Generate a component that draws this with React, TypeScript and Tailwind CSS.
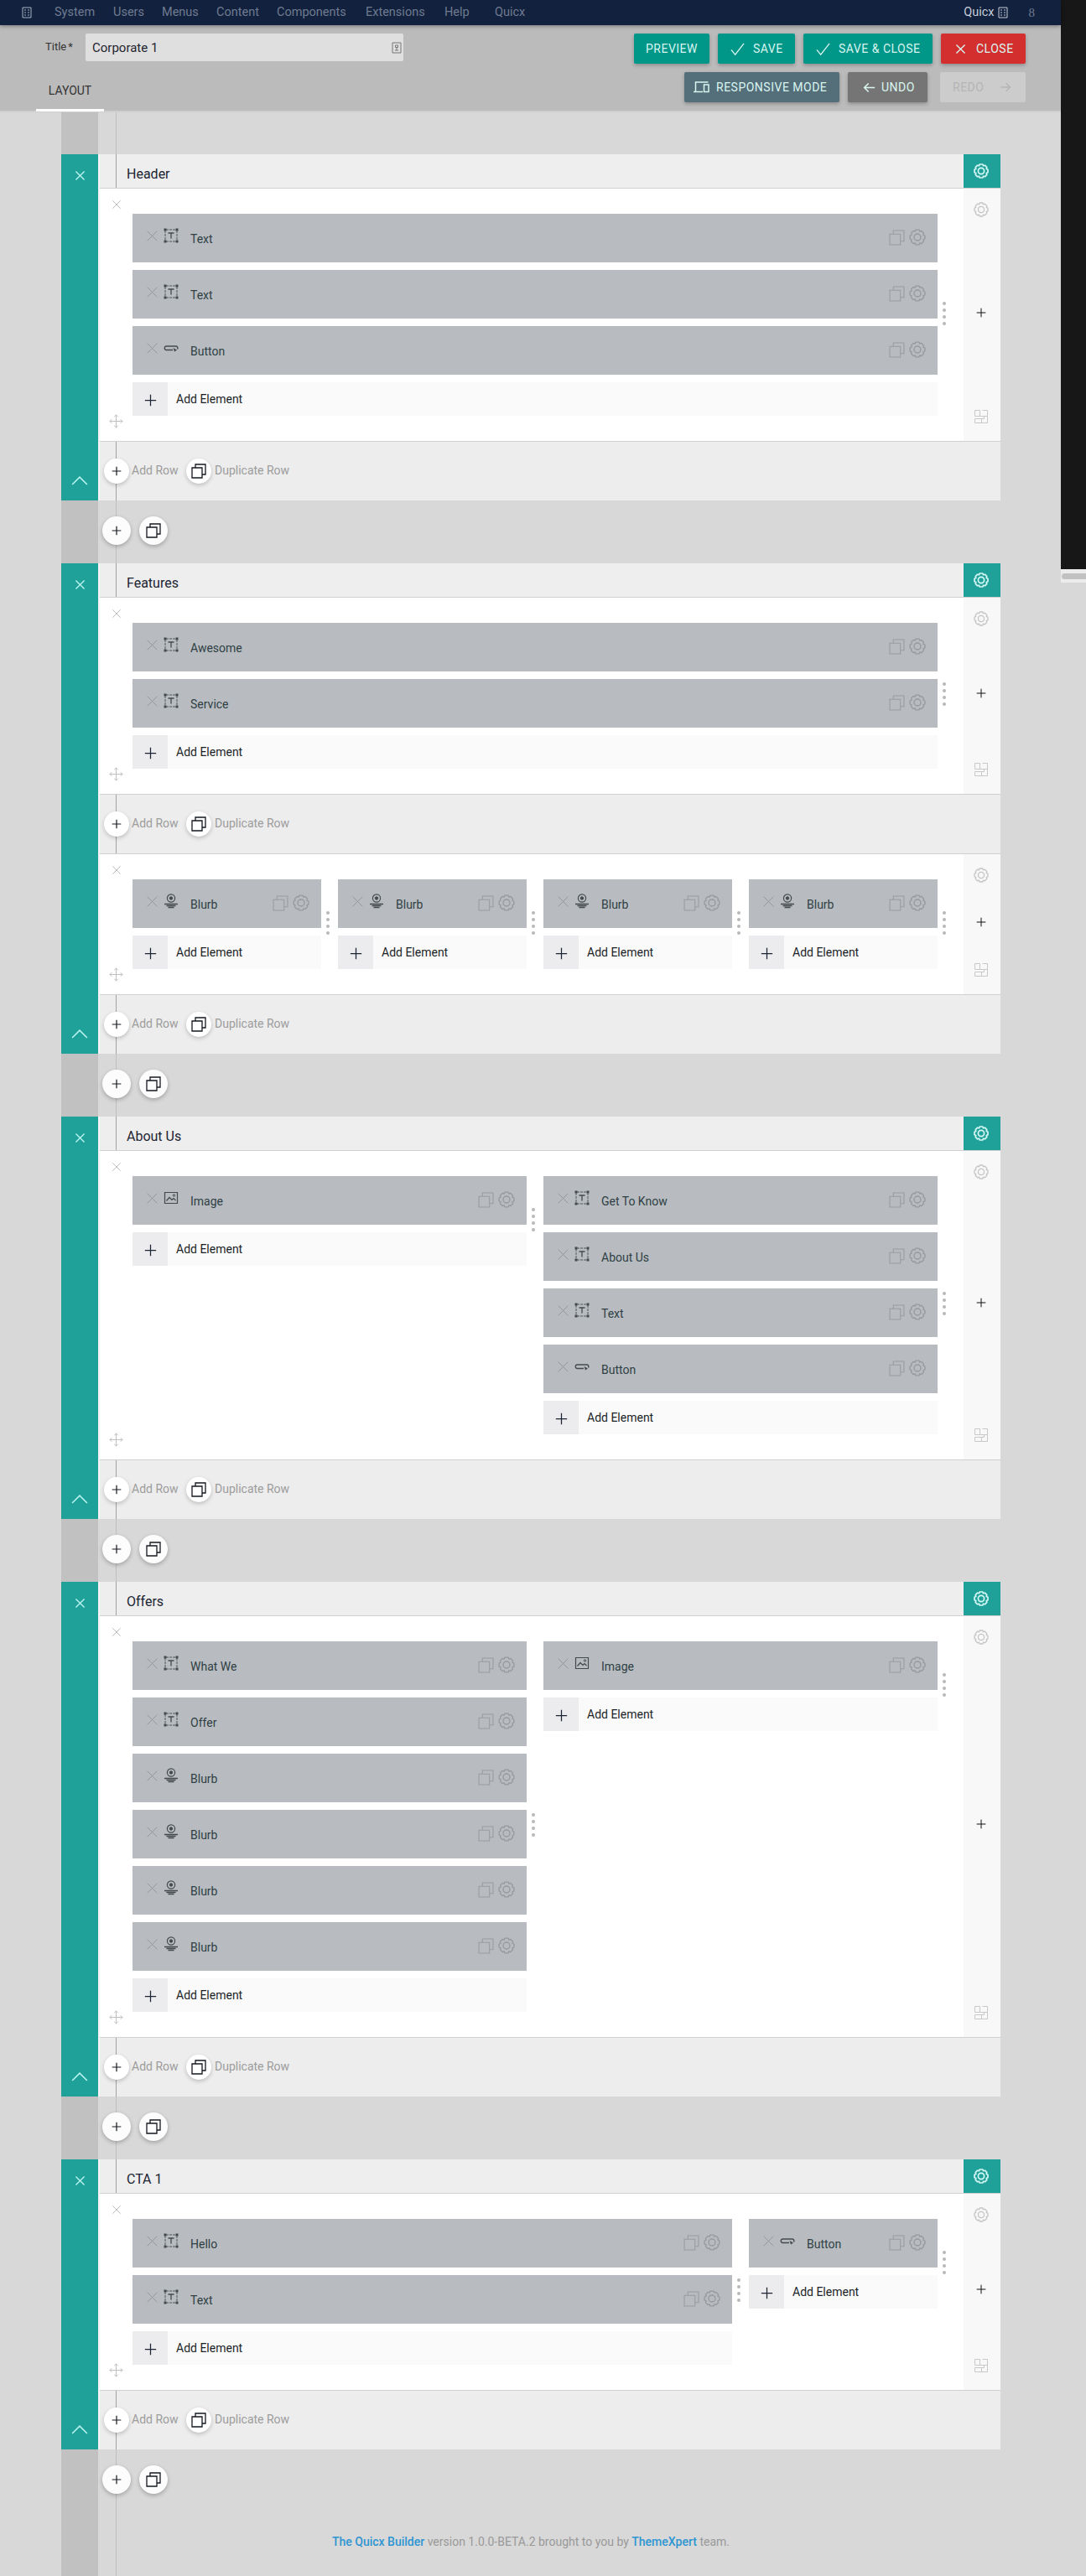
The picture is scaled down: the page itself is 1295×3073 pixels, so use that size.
import React from "react";

type Kind = "text" | "button" | "blurb" | "image";
type Item = [Kind, string];
type Col = { span: 1 | 2 | 3 | 4; items: Item[] };
type Section = { title: string; rows: Col[][] };

const blurb: Item = ["blurb", "Blurb"];
const sections: Section[] = [
  { title: "Header", rows: [[{ span: 4, items: [["text", "Text"], ["text", "Text"], ["button", "Button"]] }]] },
  {
    title: "Features",
    rows: [
      [{ span: 4, items: [["text", "Awesome"], ["text", "Service"]] }],
      [{ span: 1, items: [blurb] }, { span: 1, items: [blurb] }, { span: 1, items: [blurb] }, { span: 1, items: [blurb] }],
    ],
  },
  {
    title: "About Us",
    rows: [[
      { span: 2, items: [["image", "Image"]] },
      { span: 2, items: [["text", "Get To Know"], ["text", "About Us"], ["text", "Text"], ["button", "Button"]] },
    ]],
  },
  {
    title: "Offers",
    rows: [[
      { span: 2, items: [["text", "What We"], ["text", "Offer"], blurb, blurb, blurb, blurb] },
      { span: 2, items: [["image", "Image"]] },
    ]],
  },
  {
    title: "CTA 1",
    rows: [[
      { span: 3, items: [["text", "Hello"], ["text", "Text"]] },
      { span: 1, items: [["button", "Button"]] },
    ]],
  },
];

const spans = { 1: "col-span-1", 2: "col-span-2", 3: "col-span-3", 4: "col-span-4" };

function Svg({ size, sw = 1, className = "", children }: { size: number; sw?: number; className?: string; children: React.ReactNode }) {
  return (
    <svg width={size} height={size} viewBox="0 0 18 18" fill="none" stroke="currentColor" strokeWidth={sw} className={"shrink-0 " + className}>
      {children}
    </svg>
  );
}

const Cross = ({ size, sw, className }: { size: number; sw?: number; className?: string }) => (
  <Svg size={size} sw={sw} className={className}><path d="M2 2L16 16M16 2L2 16" /></Svg>
);
const Plus = ({ size, sw, className }: { size: number; sw?: number; className?: string }) => (
  <Svg size={size} sw={sw} className={className}><path d="M9 1V17M1 9H17" /></Svg>
);
const Copy = ({ size, sw, className }: { size: number; sw?: number; className?: string }) => (
  <Svg size={size} sw={sw} className={className}><path d="M1 5H13V17H1ZM5 5V1H17V13H13" /></Svg>
);

const gearPath = "M7.2 1H10.8L11.5 2.8L13.4 2.2L15.8 4.6L15.2 6.5L17 7.2V10.8L15.2 11.5L15.8 13.4L13.4 15.8L11.5 15.2L10.8 17H7.2L6.5 15.2L4.6 15.8L2.2 13.4L2.8 11.5L1 10.8V7.2L2.8 6.5L2.2 4.6L4.6 2.2L6.5 2.8Z";
const Gear = ({ size, sw, className }: { size: number; sw?: number; className?: string }) => (
  <Svg size={size} sw={sw} className={className}>
    <path d={gearPath} strokeLinejoin="round" />
    <circle cx="9" cy="9" r="3.6" />
  </Svg>
);
const Move = () => (
  <Svg size={17} className="text-[#bcbcbc]">
    <path d="M9 1V17M1 9H17M6.500 3.500L9 1L11.500 3.500M6.500 14.500L9 17L11.500 14.500M3.500 6.500L1 9L3.500 11.500M14.500 6.500L17 9L14.500 11.500" />
  </Svg>
);
const GridIcon = () => (
  <Svg size={18} className="text-[#c8c8c8]">
    <path d="M1.500 1.500H7.500V8.500H1.500ZM10.500 1.500H16.500V8.500H7.500M1.500 11.500H9.500V16.500H1.500ZM12.500 8.500H16.500V16.500H9.500V11.500H12.500Z" />
  </Svg>
);

function KindIcon({ kind }: { kind: Kind }) {
  return (
    <Svg size={18} className="text-[#43494d]">
      {kind === "text" && (
        <>
          <path d="M3 2H15M3 16H15M2 3V15M16 3V15" strokeDasharray="3 1" strokeWidth="0.9" />
          <g fill="currentColor" stroke="none">
            <rect x="0.500" y="0.500" width="3" height="3" /><rect x="14.500" y="0.500" width="3" height="3" />
            <rect x="0.500" y="14.500" width="3" height="3" /><rect x="14.500" y="14.500" width="3" height="3" />
          </g>
          <path d="M5.500 6H12.500M9 6V12.500" strokeWidth="1.300" />
        </>
      )}
      {kind === "button" && (
        <>
          <path d="M11 11.500H3A2.300 2.300 0 0 1 3 7H15A2.300 2.300 0 0 1 16.500 10.500" strokeWidth="1.400" />
          <path d="M11.500 9L16 11.500L13 13.500Z" fill="currentColor" stroke="none" />
        </>
      )}
      {kind === "blurb" && (
        <>
          <circle cx="9" cy="5.500" r="4.600" strokeWidth="1.200" />
          <circle cx="9" cy="5.500" r="1.700" fill="currentColor" />
          <path d="M1 12.500H17M3.500 14.500H14.500M5.500 16.500H12.500" strokeWidth="1.300" />
        </>
      )}
      {kind === "image" && (
        <>
          <path d="M1.500 2.500H16.500V15.500H1.500Z" strokeWidth="1.200" />
          <path d="M3.500 12.500L7 8.500L10 11.500L12 9.500L14.500 12" strokeWidth="1.200" />
          <circle cx="12.500" cy="6" r="1.200" />
        </>
      )}
    </Svg>
  );
}

function Element({ item }: { item: Item }) {
  return (
    <div className="flex h-[58px] items-center bg-[#b8bcc0] pl-4 pr-[14px]">
      <Cross size={15} sw={1.2} className="mb-1.5 text-[#94989c]" />
      <div className="mb-1.5 ml-[6px] flex"><KindIcon kind={item[0]} /></div>
      <span className="ml-[14px] mt-0.5 flex-1 whitespace-nowrap text-[14px] text-[#2f3f44]">{item[1]}</span>
      <Copy size={19} className="mb-0.5 text-[#989ca0]" />
      <Gear size={20} sw={1.2} className="mb-0.5 ml-[5px] text-[#96999d]" />
    </div>
  );
}

function Column({ col }: { col: Col }) {
  return (
    <div className={"relative flex flex-col gap-[9px] " + spans[col.span]}>
      {col.items.map((it, i) => <Element key={i} item={it} />)}
      <div className="flex h-10 items-center bg-[#fafafa]">
        <div className="flex h-10 w-[42px] items-center justify-center bg-[#ececee] text-[#1d2433]">
          <Plus size={15} sw={1.5} className="mt-0.5" />
        </div>
        <span className="ml-[10px] whitespace-nowrap text-[14px] text-[#1b1f26]">Add Element</span>
      </div>
      <div className="absolute -right-[10px] top-1/2 -mt-4 flex flex-col gap-1">
        {[0, 1, 2, 3].map((d) => <i key={d} className="size-1 rounded-full bg-[#b8b8b8]" />)}
      </div>
    </div>
  );
}

function Row({ cols }: { cols: Col[] }) {
  return (
    <>
      <div className="flex border-y border-[#d0d0d0] bg-white">
        <div className="flex w-[39px] flex-col items-center justify-between pb-[15px] pt-[13px]">
          <Cross size={12} sw={1.5} className="text-[#bcbcbc]" />
          <Move />
        </div>
        <div className="grid w-[960px] grid-cols-4 items-start gap-5 py-[30px]">
          {cols.map((c, i) => <Column key={i} col={c} />)}
        </div>
        <div className="ml-auto flex w-11 flex-col items-center justify-between bg-[#f8f8f8] pb-5 pr-0.5 pt-4">
          <Gear size={18} sw={1.3} className="text-[#c4c4c4]" />
          <Plus size={12} sw={1.5} className="mb-0.5 text-[#111]" />
          <GridIcon />
        </div>
      </div>
      <div className="relative flex h-[70px] items-center bg-[#ededed] pl-[5px] text-[14px] text-[#9c9c9c]">
        <i className="absolute left-[19px] top-0 h-full w-px bg-[#a2a2a2]" />
        <div className="relative z-10 flex size-[30px] items-center justify-center rounded-full bg-white text-[#14181f] shadow-[0_2px_5px_rgba(0,0,0,0.2)]">
          <Plus size={12} sw={1.8} />
        </div>
        <span className="mb-0.5 ml-[3px] w-[65px] whitespace-nowrap">Add Row</span>
        <div className="flex size-[30px] items-center justify-center rounded-full bg-white pr-px text-[#14181f] shadow-[0_2px_5px_rgba(0,0,0,0.2)]">
          <Copy size={18} sw={1.3} />
        </div>
        <span className="mb-0.5 ml-1 whitespace-nowrap">Duplicate Row</span>
      </div>
    </>
  );
}

function SectionBlock({ s }: { s: Section }) {
  return (
    <>
      <div className="flex w-[1120px]">
        <div className="flex w-11 flex-col items-center justify-between bg-[#1fa19a] pb-[14px] pt-[19px] text-[#b9f3ee]">
          <Cross size={13} sw={1.9} />
          <Svg size={20} sw={1.4}><path d="M1 13.500L9 5.500L17 13.500" /></Svg>
        </div>
        <div className="w-0.5 bg-[#f4f4f4]" />
        <div className="flex flex-1 flex-col">
          <div className="relative flex h-10 items-center bg-[#eeeeee]">
            <i className="absolute left-[19px] top-0 h-full w-px bg-[#a2a2a2]" />
            <span className="ml-8 mt-2 flex-1 text-[16px] text-[#1c2433]">{s.title}</span>
            <div className="flex h-10 w-11 items-center justify-center bg-[#1fa19a] pr-0.5 text-[#d5f8f5]">
              <Gear size={18} sw={1.7} />
            </div>
          </div>
          {s.rows.map((r, i) => <Row key={i} cols={r} />)}
        </div>
      </div>
      <div className="flex h-[75px] items-center gap-[10px] pb-[3px] pl-[49px]">
        <div className="z-10 flex size-[34px] items-center justify-center rounded-full bg-[#fcfcfc] text-[#14181f] shadow-[0_2px_5px_rgba(0,0,0,0.25)]">
          <Plus size={12} sw={1.8} />
        </div>
        <div className="flex size-[34px] items-center justify-center rounded-full bg-[#fcfcfc] pr-px text-[#14181f] shadow-[0_2px_5px_rgba(0,0,0,0.25)]">
          <Copy size={18} sw={1.3} />
        </div>
      </div>
    </>
  );
}

const menu: [string, string][] = [
  ["System", "w-[70px]"], ["Users", "w-[58px]"], ["Menus", "w-[65px]"], ["Content", "w-[72px]"],
  ["Components", "w-[106px]"], ["Extensions", "w-[94px]"], ["Help", "w-[60px]"], ["Quicx", "w-[60px]"],
];

const Missing = ({ className }: { className: string }) => (
  <svg width="12" height="14" viewBox="0 0 12 14" fill="none" stroke="currentColor" className={className}>
    <path d="M1 1H11V13H1ZM3 4H5M7 4H9M3 7H5M7 7H9M3 10H5M7 10H9" />
  </svg>
);

const btn = "flex h-9 items-center whitespace-nowrap rounded-[2px] text-[14px] tracking-[0.5px] text-[#d9f5f0] shadow-[0_2px_4px_rgba(0,0,0,0.25)] ";
const Check = () => <Svg size={17} sw={1.4} className="ml-[15px] mr-[10px]"><path d="M1 10L6 16L17 2" /></Svg>;

export default function App() {
  return (
    <div className="flex h-[3073px] w-[1295px] overflow-hidden bg-[#d8d8d8] font-['Roboto',sans-serif] leading-5">
      <div className="flex w-[1265px] flex-col">
        <nav className="relative z-20 flex h-[30px] shrink-0 items-center bg-[#12213d] pl-[26px] text-[14.5px] text-[#6f7b91] shadow-[0_1px_5px_rgba(0,0,0,0.4)]">
          <Missing className="mr-[27px] text-[#a9b3c4]" />
          {menu.map(([m, w]) => <span key={m} className={w}>{m}</span>)}
          <span className="ml-auto text-[#c6cedb]">Quicx</span>
          <Missing className="ml-1 mr-[25px] text-[#c6cedb]" />
          <span className="mr-[31px] font-['Liberation_Serif',serif] text-[15px]">8</span>
        </nav>
        <header className="flex h-[104px] shrink-0 border-b-2 border-[#cfcfcf] bg-[#bbbbbb]">
          <div className="flex flex-1 flex-col justify-between pt-[10px]">
            <div className="flex items-center pl-[54px]">
              <span className="mb-0.5 w-12 whitespace-nowrap text-[13px] text-[#333]">Title<span className="ml-0.5">*</span></span>
              <div className="flex h-[33px] w-[379px] items-center justify-between rounded-[2px] bg-[#dfdfdf] pl-2 pr-[2px] text-[15px] text-[#1f2630]">
                Corporate 1
                <svg width="12" height="14" viewBox="0 0 12 14" fill="none" stroke="#777" className="shrink-0">
                  <path d="M1 1H11V13H1ZM4.500 4H7.500V6.500H4.500ZM4 10H8M6 6.500V10" />
                </svg>
              </div>
            </div>
            <div className="-mb-px ml-[43px] flex h-[43px] w-[81px] justify-center border-b-[3px] border-white pt-[8px] text-[14px] text-[#333]">LAYOUT</div>
          </div>
          <div className="flex flex-col items-end gap-[10px] pr-[42px] pt-[10px]">
            <div className="flex gap-[10px]">
              <div className={btn + "w-[90px] justify-center bg-[#009688]"}>PREVIEW</div>
              <div className={btn + "w-[92px] bg-[#009688]"}><Check />SAVE</div>
              <div className={btn + "w-[154px] bg-[#009688]"}><Check />SAVE &amp; CLOSE</div>
              <div className={btn + "w-[101px] bg-[#d32f2f]"}><Cross size={13} sw={1.9} className="ml-[17px] mr-[12px]" />CLOSE</div>
            </div>
            <div className="flex">
              <div className={btn + "mr-[10px] w-[185px] bg-[#546e7a]"}>
                <svg width="19" height="14" viewBox="0 0 19 14" fill="none" stroke="currentColor" strokeWidth="1.500" className="ml-[11px] mr-2">
                  <path d="M0 12.500H11M2.500 12V1H17.500M12.500 4H18V12.500H12.500Z" />
                </svg>
                RESPONSIVE MODE
              </div>
              <div className={btn + "mr-[15px] w-[95px] bg-[#757575]"}>
                <Svg size={15} sw={1.9} className="ml-[18px] mr-[7px]"><path d="M17 9H2M8 3L2 9L8 15" /></Svg>UNDO
              </div>
              <div className="flex h-9 w-[102px] items-center rounded-[2px] bg-[#cccccc] pl-[15px] text-[14px] tracking-[0.5px] text-[#b5b5b5]">
                REDO<Svg size={14} sw={1.9} className="ml-[19px]"><path d="M1 9H16M10 3L16 9L10 15" /></Svg>
              </div>
            </div>
          </div>
        </header>
        <main className="relative ml-[73px] flex flex-1 flex-col pt-[50px]">
          <div className="absolute inset-y-0 left-0 w-11 bg-[#c1c1c1]" />
          <div className="absolute inset-y-0 left-[65px] w-px bg-[#bfbfbf]" />
          <div className="relative flex flex-col">
            {sections.map((s) => <SectionBlock key={s.title} s={s} />)}
          </div>
          <p className="mt-[25px] pr-[72px] text-center text-[14px] text-[#999]">
            <b className="font-medium text-[#2d95d2]">The Quicx Builder</b> version 1.0.0-BETA.2 brought to you by{" "}
            <b className="font-medium text-[#2d95d2]">ThemeXpert</b> team.
          </p>
        </main>
      </div>
      <aside className="w-[30px]">
        <div className="h-[679px] bg-[#171717]" />
        <div className="flex h-4 items-center bg-[#ececec] pl-px">
          <div className="h-[7px] w-full rounded-l-full bg-[#c1c1c1]" />
        </div>
      </aside>
    </div>
  );
}
